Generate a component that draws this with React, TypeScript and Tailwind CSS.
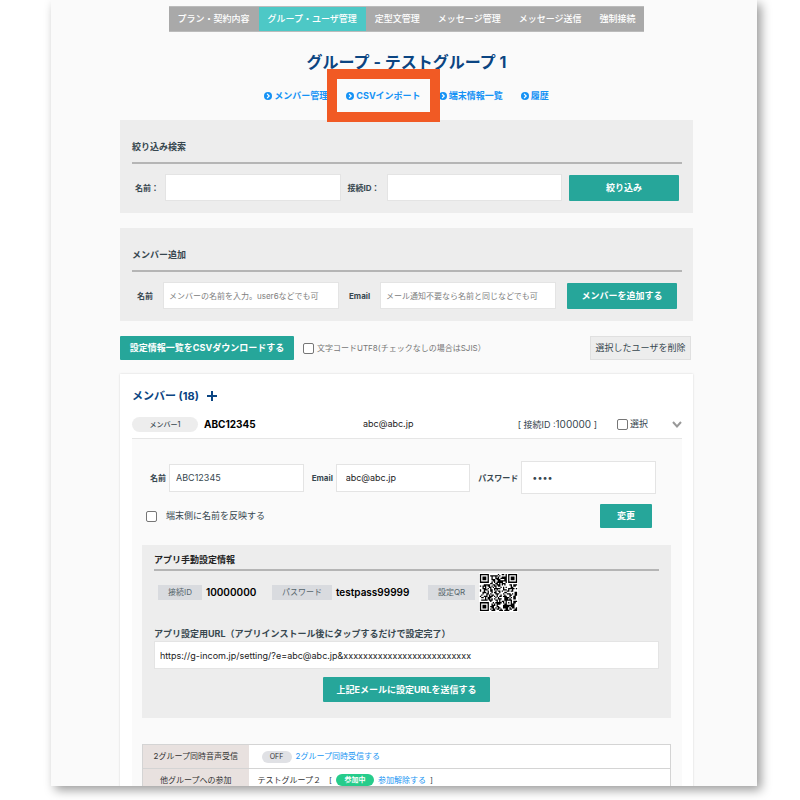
import React from "react";

const NAV = ["プラン・契約内容", "グループ・ユーザ管理", "定型文管理", "メッセージ管理", "メッセージ送信", "強制接続"];
const LINKS = ["メンバー管理", "CSVインポート", "端末情報一覧", "履歴"];

const FIELD = "min-w-0 border border-[#e4e4e4] bg-white outline-none";
const PRIMARY = "rounded-[1px] bg-[#26a69a] font-bold text-white text-[9px] leading-[14px]";
const CHECK = "size-[11px] shrink-0 appearance-none rounded-[2px] border border-[#767676] bg-white";

function CircleArrow() {
  return (
    <svg viewBox="0 0 16 16" className="size-2 shrink-0" aria-hidden="true">
      <circle cx="8" cy="8" r="8" fill="#1592f5" />
      <path d="M6.2 3.8 10.4 8l-4.2 4.2" fill="none" stroke="#fff" strokeWidth="2.4" />
    </svg>
  );
}

const QR_SIZE = 29;

function finder(x: number, y: number): boolean | null {
  const corners = [[0, 0], [QR_SIZE - 7, 0], [0, QR_SIZE - 7]];
  for (const [cx, cy] of corners) {
    const dx = x - cx;
    const dy = y - cy;
    if (dx >= -1 && dx <= 7 && dy >= -1 && dy <= 7) {
      const ring = Math.max(Math.abs(dx - 3), Math.abs(dy - 3));
      return ring === 3 || ring <= 1;
    }
  }
  const ring = Math.max(Math.abs(x - 22), Math.abs(y - 22));
  if (ring <= 2) return ring !== 1;
  return null;
}

function qrPath(): string {
  let seed = 20731;
  let d = "";
  for (let y = 0; y < QR_SIZE; y++) {
    for (let x = 0; x < QR_SIZE; x++) {
      seed = (seed * 1103515245 + 12345) % 2147483648;
      const fixed = finder(x, y);
      const dark = fixed === null ? seed / 2147483648 > 0.47 : fixed;
      if (dark) d += `M${x} ${y}h1v1h-1z`;
    }
  }
  return d;
}

function QrCode() {
  return (
    <svg viewBox="-0.7 -0.7 30.4 30.4" className="size-[39px] bg-white" role="img" aria-label="設定QR">
      <path d={qrPath()} fill="#000" />
    </svg>
  );
}

function Panel({ title, children }: { title: string; children: React.ReactNode }) {
  return (
    <section className="mb-[15px] bg-[#ededed] pt-5 pr-[11px] pb-3 pl-3">
      <h2 className="border-b-2 border-[#b5b5b5] pb-[9px] text-[9px] leading-[13px] font-bold">{title}</h2>
      <div className="mt-[10px] flex h-[27px] items-center">{children}</div>
    </section>
  );
}

function Tag({ children }: { children: React.ReactNode }) {
  return <dt className="bg-[#d9dbdf] px-[10px] text-[8px] leading-[15px] text-[#56656c]">{children}</dt>;
}

export default function App() {
  return (
    <div className="h-screen overflow-hidden bg-white font-['Inter','Noto_Sans_CJK_JP',sans-serif] text-[#37474f]">
      <main className="mr-[43px] ml-[51px] h-[calc(100vh-14px)] overflow-hidden bg-[#fafafa] pt-[6px] pr-16 pl-[69px] shadow-[4px_4px_10px_rgba(0,0,0,0.4)]">
        <nav className="mx-auto flex w-fit border-y border-[#bbb] bg-[#a9a9a9] font-['Noto_Sans_CJK_JP',sans-serif] text-[9px] leading-6 font-medium whitespace-nowrap text-white">
          {NAV.map((n, i) => (
            <a key={n} href="#" className={i === 1 ? "bg-[#4dc8c6] px-[9px]" : "px-[9px]"}>{n}</a>
          ))}
        </nav>

        <h1 className="mt-[18px] text-center text-[16px] leading-6 font-bold text-[#0b4582]">グループ - テストグループ 1</h1>

        <div className="mt-[14px] mb-[17px] flex justify-center gap-[18px] text-[9px] leading-[15px] font-bold whitespace-nowrap text-[#1592f5]">
          {LINKS.map((l, i) => (
            <a key={l} href="#" className="relative flex items-center gap-[2px]">
              <CircleArrow />
              {l}
              {i === 1 && <span className="absolute -inset-[19px] z-10 border-10 border-[#f15a24]" />}
            </a>
          ))}
        </div>

        <Panel title="絞り込み検索">
          <label htmlFor="f-name" className="w-[33px] shrink-0 pl-[3px] text-[8px] font-bold">名前：</label>
          <input id="f-name" className={`${FIELD} h-[27px] flex-1`} />
          <label htmlFor="f-id" className="w-[46px] shrink-0 pl-[7px] text-[8px] font-bold whitespace-nowrap">接続ID：</label>
          <input id="f-id" className={`${FIELD} h-[27px] flex-1`} />
          <button className={`${PRIMARY} mr-[3px] ml-[7px] h-[26px] w-[110px] shrink-0`}>絞り込み</button>
        </Panel>

        <Panel title="メンバー追加">
          <label htmlFor="a-name" className="w-[31px] shrink-0 pl-[5px] text-[8px] font-bold">名前</label>
          <input id="a-name" placeholder="メンバーの名前を入力。user6などでも可" className={`${FIELD} h-[27px] flex-1 px-[5px] text-[8px] placeholder:text-[#808080]`} />
          <label htmlFor="a-mail" className="w-[41px] shrink-0 pl-[10px] text-[8px] font-bold">Email</label>
          <input id="a-mail" placeholder="メール通知不要なら名前と同じなどでも可" className={`${FIELD} h-[27px] flex-1 px-[5px] text-[8px] placeholder:text-[#808080]`} />
          <button className={`${PRIMARY} mr-[5px] ml-[11px] h-[26px] w-[110px] shrink-0`}>メンバーを追加する</button>
        </Panel>

        <div className="flex items-center whitespace-nowrap">
          <button className={`${PRIMARY} h-6 w-[174px]`}>設定情報一覧をCSVダウンロードする</button>
          <label className="ml-[9px] flex items-center gap-[3px] text-[8px] leading-3 text-[#777]">
            <input type="checkbox" className={CHECK} />
            文字コードUTF8(チェックなしの場合はSJIS）
          </label>
          <button className="mr-[2px] ml-auto h-6 w-[101px] border border-[#e0e0e0] bg-[#ededed] text-[9px] leading-[14px]">選択したユーザを削除</button>
        </div>

        <section className="mt-[14px] bg-white pr-[11px] pl-3 shadow-[0_0_2px_rgba(0,0,0,0.15)]">
          <h2 className="flex items-center gap-2 pt-[14px] text-[11px] leading-4 font-bold text-[#0b4582]">
            メンバー (18)
            <svg viewBox="0 0 10 10" className="size-[10px]" aria-hidden="true">
              <path d="M5 0v10M0 5h10" stroke="#0b4582" strokeWidth="2" />
            </svg>
          </h2>

          <div className="mt-[6px] flex h-[29px] items-center border-b border-[#e6e6e6] text-[9px] whitespace-nowrap">
            <span className="w-[66px] rounded-full bg-[#ededed] text-center text-[7px] leading-[15px] font-medium">メンバー1</span>
            <span className="ml-[6px] w-[159px] text-[10px] font-bold text-black">ABC12345</span>
            <span className="text-[#222]">abc@abc.jp</span>
            <span className="ml-auto">[ 接続ID :<span className="text-[10px]">100000</span> ]</span>
            <label className="ml-5 flex items-center gap-[2px]">
              <input type="checkbox" className={CHECK} />
              選択
            </label>
            <button aria-label="閉じる" className="ml-6">
              <svg viewBox="0 0 10 7" className="h-[7px] w-[10px]">
                <path d="m1 1 4 4.4L9 1" fill="none" stroke="#999" strokeWidth="2" />
              </svg>
            </button>
          </div>

          <div className="bg-[#fafafa] pt-[22px] pr-[11px] pl-[10px]">
            <div className="grid grid-cols-[19px_1fr_32px_1fr_51px_1fr] items-center pr-[15px] pl-2 text-[8px] font-bold whitespace-nowrap">
              <label htmlFor="m-name">名前</label>
              <input id="m-name" defaultValue="ABC12345" className={`${FIELD} h-7 px-[6px] text-[9px] font-normal`} />
              <label htmlFor="m-mail" className="pl-2">Email</label>
              <input id="m-mail" defaultValue="abc@abc.jp" className={`${FIELD} h-7 px-[9px] text-[9px] font-normal text-[#222]`} />
              <label htmlFor="m-pass" className="pl-2">パスワード</label>
              <input id="m-pass" type="password" defaultValue="pass" className={`${FIELD} h-[33px] px-[10px] text-[9px] font-normal`} />
            </div>

            <div className="mt-[10px] flex items-center justify-between pr-[19px] pl-1">
              <label className="flex items-center gap-[9px] text-[9px]">
                <input type="checkbox" className={CHECK} />
                端末側に名前を反映する
              </label>
              <button className={`${PRIMARY} h-6 w-[52px]`}>変更</button>
            </div>

            <section className="mt-[17px] bg-[#ededed] px-3 pt-2 pb-4 text-[9px]">
              <h3 className="border-b-2 border-[#b5b5b5] pb-[3px] leading-[13px] font-bold text-[#222]">アプリ手動設定情報</h3>
              <dl className="flex items-center pt-[2px] pl-1 whitespace-nowrap">
                <Tag>接続ID</Tag>
                <dd className="ml-1 w-[66px] text-[10px] font-semibold text-black">10000000</dd>
                <Tag>パスワード</Tag>
                <dd className="ml-1 w-[92px] text-[10px] font-semibold text-black">testpass99999</dd>
                <Tag>設定QR</Tag>
                <dd className="ml-1"><QrCode /></dd>
              </dl>
              <label htmlFor="m-url" className="mt-[15px] block leading-[14px] font-bold">アプリ設定用URL（アプリインストール後にタップするだけで設定完了）</label>
              <input id="m-url" defaultValue="https://g-incom.jp/setting/?e=abc@abc.jp&xxxxxxxxxxxxxxxxxxxxxxxxxx" className={`${FIELD} block h-7 w-full px-[5px] text-[9px] text-[#222]`} />
              <button className={`${PRIMARY} mx-auto mt-2 block h-[25px] w-[167px]`}>上記Eメールに設定URLを送信する</button>
            </section>

            <table className="mt-[26px] w-full border-collapse border border-[#d4d4d4] bg-white text-[8px] whitespace-nowrap">
              <tbody>
                <tr className="border-b border-[#d4d4d4] leading-[23px]">
                  <th className="w-[106px] bg-[#e8e1df] p-0 font-normal text-[#333]">2グループ同時音声受信</th>
                  <td className="p-0 pl-[13px]">
                    <span className="flex items-center gap-1">
                      <span className="w-[30px] rounded-full bg-[#e0e1e5] text-center text-[7px] leading-3 text-[#333]">OFF</span>
                      <a href="#" className="text-[#2196f3]">2グループ同時受信する</a>
                    </span>
                  </td>
                </tr>
                <tr className="leading-[22px]">
                  <th className="bg-[#e8e1df] p-0 font-normal text-[#333]">他グループへの参加</th>
                  <td className="p-0 pl-[9px]">
                    <span className="flex items-center gap-1">
                      <span className="mr-1 text-[#333]">テストグループ２</span>
                      <span>[</span>
                      <span className="w-[38px] rounded-full bg-[#26cc8b] text-center text-[7px] leading-3 font-bold text-white">参加中</span>
                      <a href="#" className="text-[#2196f3]">参加解除する</a>
                      <span>]</span>
                    </span>
                  </td>
                </tr>
              </tbody>
            </table>
            <div className="h-5" />
          </div>
        </section>
      </main>
    </div>
  );
}
